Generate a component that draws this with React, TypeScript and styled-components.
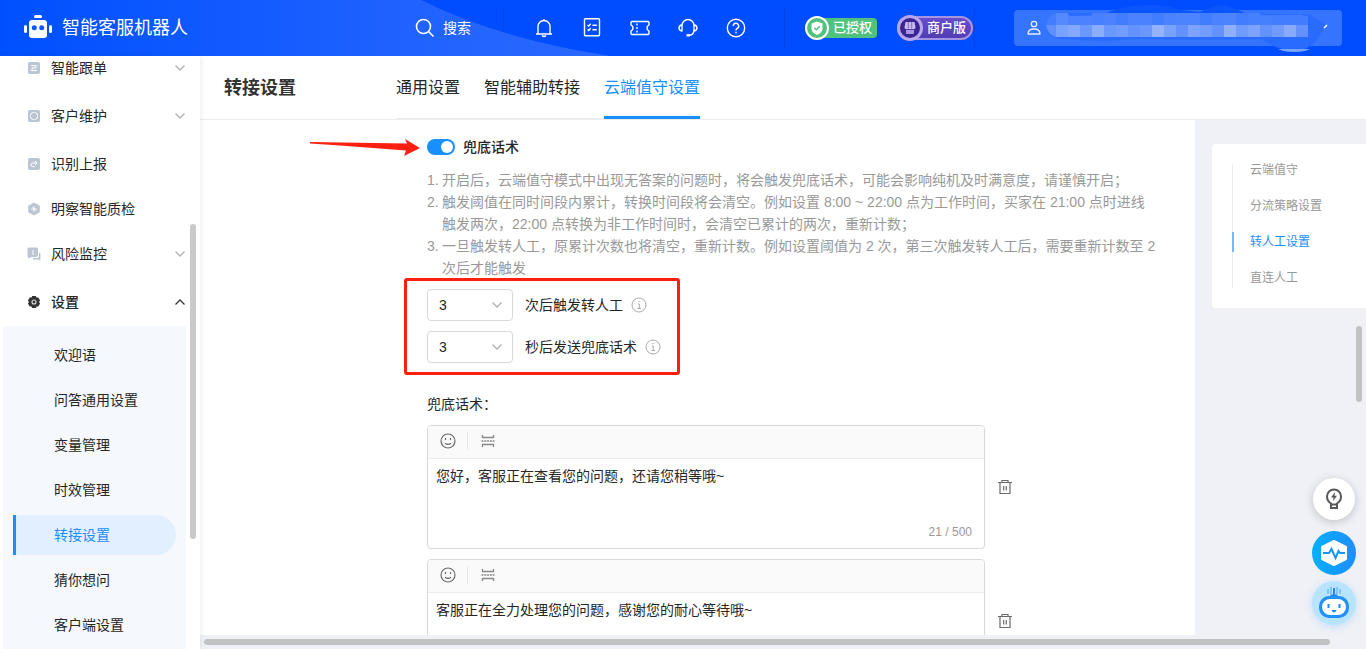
import React, { useState } from "react";
import styled, { createGlobalStyle, css } from "styled-components";

const blue = "#1890ff";
const ink = "#262626";
const red = "#fd1f10";

const GlobalStyle = createGlobalStyle`
  * { box-sizing: border-box; }
  body {
    margin: 0;
    overflow: hidden;
    background: #fff;
    color: ${ink};
    font-family: "Liberation Sans", "Noto Sans CJK SC", sans-serif;
    font-size: 14px;
    line-height: 22px;
  }
  button, input, select, textarea { font: inherit; color: inherit; margin: 0; }
  button { border: 0; padding: 0; background: none; cursor: pointer; }
  a { color: inherit; text-decoration: none; }
  svg { display: block; flex: none; }
`;

const Shell = styled.div`
  display: grid;
  grid-template: 56px minmax(0, 1fr) / 200px minmax(0, 1fr);
  height: 100vh;
`;

/* ---------- top bar ---------- */

const TopBar = styled.header`
  grid-column: 1 / -1;
  position: relative;
  display: flex;
  align-items: center;
  padding: 0 24px;
  background: #004dff;
  color: #fff;
`;

const Wave = styled.svg`
  position: absolute;
  left: 0;
  top: 0;
`;

const Brand = styled.div`
  position: relative;
  display: flex;
  align-items: center;
  gap: 10px;
  margin-right: auto;
  font-size: 18px;
`;

const SearchButton = styled.button`
  position: relative;
  display: flex;
  align-items: center;
  gap: 8px;
  width: 88px;
`;

const ToolIcons = styled.div`
  display: flex;
  align-items: center;
  gap: 28px;
  padding: 0 38px 0 30px;
  border: solid #0047e6;
  border-width: 0 1px;
  height: 40px;
`;

const Badges = styled.div`
  display: flex;
  align-items: center;
  gap: 20px;
  padding: 0 1px 0 20px;
  height: 40px;
  border-right: 1px solid #0047e6;
`;

const Badge = styled.span<{ $kind: "green" | "purple" }>`
  display: flex;
  align-items: center;
  gap: 4px;
  height: 20px;
  padding-right: ${(p) => (p.$kind === "green" ? 5 : 7)}px;
  font-weight: 500;
  font-size: 13px;
  border-radius: ${(p) => (p.$kind === "green" ? "10px 4px 4px 10px" : "12px")};
  background: ${(p) => (p.$kind === "green" ? "#50c27d" : "linear-gradient(#6a4fd0, #4f3bb0)")};
  ${(p) =>
    p.$kind === "purple" &&
    css`
      height: 24px;
      box-shadow: inset 0 0 0 2px #a593e4;
    `}
`;

const Account = styled.button`
  position: relative;
  width: 328px;
  height: 36px;
  margin-left: 39px;
  border-radius: 4px;
  background: #3474ff;
`;

const AccountArt = styled.svg`
  position: absolute;
  left: 0;
  top: -10px;
`;

/* ---------- side menu ---------- */

const Side = styled.nav`
  position: relative;
  z-index: 1;
  overflow: hidden;
  box-shadow: 1px 0 5px rgba(0, 0, 0, 0.07);
  background: #fff;
`;

const MenuList = styled.ul`
  list-style: none;
  margin: -8px 0 0;
  padding: 0;
`;

const MenuRow = styled.button<{ $open?: boolean; $leaf?: boolean }>`
  display: flex;
  align-items: center;
  gap: 10px;
  width: 100%;
  height: 40px;
  padding: 0 14px 0 28px;
  margin-bottom: ${(p) => (p.$leaf ? 5 : 8)}px;
  text-align: left;
  font-weight: ${(p) => (p.$open ? 500 : 400)};
  ${(p) => p.$open && "margin-bottom: 4px;"}
  span { flex: 1; margin-left: 1px; }
`;

const SubMenu = styled.ul`
  display: grid;
  gap: 5px;
  list-style: none;
  margin: 0 14px 0 3px;
  padding: 9px 10px;
  background: #f5f9fd;
`;

const SubLink = styled.a<{ $active?: boolean }>`
  display: block;
  padding: 9px 38px;
  border-left: 3px solid ${(p) => (p.$active ? blue : "transparent")};
  border-radius: 0 20px 20px 0;
  background: ${(p) => (p.$active ? "#e1efff" : "none")};
  color: ${(p) => (p.$active ? blue : ink)};
`;

const Thumb = styled.div<{ $side?: boolean }>`
  position: absolute;
  right: 4px;
  width: 6px;
  border-radius: 3px;
  ${(p) =>
    p.$side
      ? "top: 168px; height: 315px; background: #c9c9c9;"
      : "top: 270px; height: 76px; background: #c1c2c3;"}
`;

/* ---------- page ---------- */

const Page = styled.main`
  position: relative;
  display: flex;
  flex-direction: column;
  min-width: 0;
  min-height: 0;
`;

const PageHead = styled.div`
  display: flex;
  height: 64px;
  padding-left: 24px;
  border-bottom: 1px solid #ececee;
`;

const PageTitle = styled.h1`
  width: 172px;
  margin: 0;
  font-size: 18px;
  line-height: 64px;
  font-weight: 700;
  color: #333;
`;

const Tabs = styled.nav`
  display: flex;
  gap: 24px;
  box-shadow: inset 0 -1px #ececee;
`;

const Tab = styled.a<{ $active?: boolean }>`
  font-size: 16px;
  line-height: 64px;
  height: 63px;
  color: ${(p) => (p.$active ? blue : ink)};
  box-shadow: ${(p) => (p.$active ? `inset 0 -3px ${blue}` : "none")};
`;

const Body = styled.div`
  flex: 1;
  min-height: 0;
  display: flex;
  overflow: hidden;
  background: #eff1f6;
`;

const Panel = styled.section`
  flex: 1;
  min-width: 0;
  height: max-content;
  padding: 16px 34px 24px 227px;
  background: #fff;
`;

const SwitchRow = styled.label`
  position: relative;
  display: flex;
  align-items: center;
  gap: 8px;
  width: max-content;
  font-weight: 500;
`;

const Arrow = styled.svg`
  position: absolute;
  right: 100%;
  top: 2px;
  margin-right: 7px;
`;

const Switch = styled.input`
  appearance: none;
  width: 28px;
  height: 16px;
  border-radius: 8px;
  background: #bfbfbf;
  padding: 2px;
  &::before {
    content: "";
    display: block;
    width: 12px;
    height: 12px;
    border-radius: 50%;
    background: #fff;
  }
  &:checked { background: ${blue}; }
  &:checked::before { margin-left: auto; }
`;

const Notes = styled.ol`
  max-width: 730px;
  margin: 11px 0 10px;
  padding: 0;
  list-style: none;
  color: #999;
`;

const Note = styled.li`
  display: grid;
  grid-template-columns: 15px 1fr;
`;

const Rules = styled.div`
  position: relative;
  display: grid;
  gap: 10px;
  width: max-content;
`;

const Highlight = styled.div`
  position: absolute;
  inset: -11px -19px -12px -23px;
  border: 3px solid ${red};
  border-radius: 3px;
  pointer-events: none;
`;

const Rule = styled.div`
  display: flex;
  align-items: center;
  gap: 8px;
  label { margin-left: 4px; }
`;

const SelectBox = styled.span`
  display: grid;
  align-items: center;
  width: 86px;
  > * { grid-area: 1 / 1; }
  svg { justify-self: end; margin-right: 10px; pointer-events: none; }
`;

const Select = styled.select`
  appearance: none;
  height: 32px;
  padding: 0 11px;
  border: 1px solid #d9d9d9;
  border-radius: 4px;
  background: #fff;
`;

const SectionLabel = styled.h2`
  margin: 30px 0 10px;
  font-size: 14px;
  font-weight: 400;
`;

const ReplyRow = styled.div`
  display: flex;
  align-items: center;
  gap: 12px;
  margin-bottom: 10px;
`;

const Editor = styled.div`
  display: flex;
  flex-direction: column;
  width: 558px;
  height: 124px;
  border: 1px solid #d9d9d9;
  border-radius: 4px;
  overflow: hidden;
`;

const EditorTools = styled.div`
  display: flex;
  align-items: center;
  gap: 12px;
  height: 33px;
  padding: 0 12px 2px;
  border-bottom: 1px solid #ececec;
  background: #fafafa;
`;

const ToolDivider = styled.i`
  width: 1px;
  height: 18px;
  margin-left: -1px;
  background: #e8e8e8;
`;

const TextArea = styled.textarea`
  flex: 1;
  min-height: 0;
  padding: 6px 8px;
  border: 0;
  outline: 0;
  resize: none;
  background: #fff;
`;

const Counter = styled.div`
  padding: 0 12px 5px;
  font-size: 12px;
  text-align: right;
  color: #999;
`;

const Aside = styled.aside`
  flex: none;
  width: 171px;
  padding: 24px 0 0 17px;
`;

const AnchorCard = styled.nav`
  padding: 16px 20px 20px;
  border-radius: 4px 0 0 4px;
  background: #fff;
`;

const AnchorList = styled.ul`
  display: grid;
  gap: 16px;
  list-style: none;
  margin: 0;
  padding: 0;
  background: linear-gradient(transparent 4px, #ececee 4px) 0 0 / 1px 100% no-repeat;
`;

const AnchorLink = styled.a<{ $active?: boolean }>`
  display: block;
  padding-left: 16px;
  border-left: 2px solid ${(p) => (p.$active ? "#74b9ff" : "transparent")};
  font-size: 12px;
  line-height: 20px;
  color: ${(p) => (p.$active ? blue : "#999")};
`;

const HBar = styled.div`
  height: 14px;
  padding: 4px 36px 4px 4px;
  background: #eff1f6;
  &::before {
    content: "";
    display: block;
    height: 6px;
    border-radius: 3px;
    background: #c1c2c3;
  }
`;

const FloatTools = styled.div`
  position: fixed;
  right: 10px;
  bottom: 24px;
  display: grid;
  justify-items: center;
  gap: 6px;
`;

const FloatButton = styled.button<{ $kind: "tip" | "pulse" | "bot" }>`
  display: grid;
  place-items: center;
  width: 44px;
  height: 44px;
  border-radius: 50%;
  ${(p) =>
    p.$kind === "tip" &&
    "width: 42px; height: 42px; margin-bottom: 5px; background: #fff; box-shadow: 0 2px 10px rgba(0,0,0,.2);"}
  ${(p) => p.$kind === "pulse" && "background: linear-gradient(90deg, #06b0fa, #1f8dff);"}
  ${(p) => p.$kind === "bot" && "background: #b8e4ff; box-shadow: 0 2px 8px rgba(24,144,255,.2);"}
`;

/* ---------- icons ---------- */

const Line = ({ size = 20, children, ...rest }: { size?: number; children: React.ReactNode } & React.SVGProps<SVGSVGElement>) => (
  <svg width={size} height={size} viewBox={`0 0 ${size} ${size}`} fill="none" stroke="currentColor" strokeWidth="1.4" aria-hidden="true" {...rest}>
    {children}
  </svg>
);

const Chevron = ({ up, color = "#b0b0b0" }: { up?: boolean; color?: string }) => (
  <Line size={12} stroke={color} strokeWidth="1.3">
    <path d={up ? "M1.500 8.500 6 4l4.500 4.500" : "M1.500 3.500 6 8l4.500-4.500"} />
  </Line>
);

const BrandIcon = () => (
  <svg width="28" height="26" viewBox="0 0 28 26" fill="#fff" aria-hidden="true">
    <rect x="10" y="0" width="8" height="3" rx="1.5" />
    <rect x="0" y="10" width="3" height="8" rx="1.5" />
    <rect x="25" y="10" width="3" height="8" rx="1.5" />
    <rect x="5" y="5" width="18" height="18" rx="3" />
    <circle cx="10.3" cy="12.7" r="2.5" fill="#0b57ff" />
    <circle cx="17.7" cy="12.7" r="2.5" fill="#0b57ff" />
  </svg>
);

const MenuIcon = ({ name }: { name: string }) => {
  const box = <rect width="12" height="12" rx="2" fill="#bcc5d3" />;
  const drawing: Record<string, React.ReactNode> = {
    order: <>{box}<path d="M3 3.7h4.8v2.3H4v2.6h5M9 3.2v1M3 8.1v1" stroke="#fff" fill="none" /></>,
    customer: <>{box}<circle cx="6" cy="6" r="3.7" stroke="#fff" fill="none" strokeDasharray="5 .8" /></>,
    report: <>{box}<path d="M8.5 5H4.8a1.6 1.6 0 0 0 0 3.6H7M7 3l2 2-2 2" stroke="#fff" fill="none" /></>,
    quality: <><path d="M6-.5 11.8 2.8v6.4L6 12.5.2 9.2V2.8z" fill="#bcc5d3" /><path d="M6 3.2v5.6M3.2 6h5.6M4.5 4.5 7.5 7.5" stroke="#fff" fill="none" /></>,
    risk: <><path d="M1-.5h7.5a1.5 1.5 0 0 1 1.5 1.5v6a2 2 0 0 1-2 2H3.5L.5 10.5-.5 8V1A1.5 1.5 0 0 1 1-.5z" fill="#bcc5d3" /><path d="M11 4.5l1.4 1v7.2L10.8 11.5H5.2L4.7 10H9a2 2 0 0 0 2-2z" fill="#bcc5d3" /><path d="M5 2v5" stroke="#fff" /></>,
    settings: <><path d="M4.200 0h3.600l.7 1.600 1.800-.2 1.800 3L11 6l1.100 1.600-1.800 3-1.800-.2-.7 1.600H4.200l-.7-1.600-1.800.2-1.800-3L1 6-.1 4.400l1.800-3 1.800.2z" fill="#333" /><circle cx="6" cy="6" r="2" stroke="#ddd" fill="none" strokeWidth="1.100" /></>,
  };
  return (
    <svg width="12" height="12" viewBox="0 0 12 12" overflow="visible" aria-hidden="true">
      {drawing[name]}
    </svg>
  );
};

const InfoIcon = () => (
  <Line size={16} stroke="#aaa" strokeWidth="1">
    <circle cx="8" cy="8" r="7" />
    <path d="M6.800 7H8.300v4.500M6.500 11.500h3.500M7.300 4.500h1.400" />
  </Line>
);

const SmileIcon = () => (
  <Line size={16} stroke="#6b6b6b" strokeWidth="1.2">
    <circle cx="8" cy="8" r="7" />
    <path d="M5.500 5v2M10.500 5v2M5 10.200q3 2.200 6 0" />
  </Line>
);

const SplitIcon = () => (
  <Line size={16} stroke="#8a8a8a" strokeWidth="1.300">
    <path d="M2.500 2v2.500h11V2M2.500 14v-2.500h11V14" />
    <path d="M1.500 8h13" strokeDasharray="2 .8" />
  </Line>
);

const TrashIcon = () => (
  <Line size={16} stroke="#6b6b6b" strokeWidth="1.200">
    <path d="M1 3.500h14M5 3V1.500h6V3M3 3.500v11h10v-11M6.700 7v4.500M9.300 7v4.500" />
  </Line>
);

const mosaicTop = ["#558aff", "#4c82ff", "#4c82ff", "#4880ff", "#4c82ff", "#427cff", "#4a82ff", "#4a82ff", "#427cff", "#4a82ff", "#4c84ff", "#4c84ff", "#427cff", "#4a82ff", "#4c84ff", "#427cff", "#4580ff", "#4580ff", "#427cff", "#427cff", "#427cff"];
const mosaicLow = ["#79a1ff", "#83a8ff", "#6b98ff", "#8badff", "#6b98ff", "#729dff", "#6392ff", "#6b98ff", "#94b2ff", "#79a1ff", "#6392ff", "#7ba3ff", "#729dff", "#6392ff", "#8fb0ff", "#719cff", "#7ba3ff", "#6392ff", "#719cff", "#87aaff", "#6392ff"];

/* ---------- content ---------- */

const menu = [
  { icon: "order", text: "智能跟单" },
  { icon: "customer", text: "客户维护" },
  { icon: "report", text: "识别上报", leaf: true },
  { icon: "quality", text: "明察智能质检", leaf: true },
  { icon: "risk", text: "风险监控" },
  { icon: "settings", text: "设置", open: true },
];
const subMenu = ["欢迎语", "问答通用设置", "变量管理", "时效管理", "转接设置", "猜你想问", "客户端设置"];
const tabs = ["通用设置", "智能辅助转接", "云端值守设置"];
const anchors = ["云端值守", "分流策略设置", "转人工设置", "直连人工"];
const notes = [
  "开启后，云端值守模式中出现无答案的问题时，将会触发兜底话术，可能会影响纯机及时满意度，请谨慎开启；",
  "触发阈值在同时间段内累计，转换时间段将会清空。例如设置 8:00 ~ 22:00 点为工作时间，买家在 21:00 点时进线触发两次，22:00 点转换为非工作时间时，会清空已累计的两次，重新计数；",
  "一旦触发转人工，原累计次数也将清空，重新计数。例如设置阈值为 2 次，第三次触发转人工后，需要重新计数至 2 次后才能触发",
];
const rules = [
  { id: "times", text: "次后触发转人工" },
  { id: "seconds", text: "秒后发送兜底话术" },
];

function Reply({ initial, counter }: { initial: string; counter?: boolean }) {
  const [text, setText] = useState(initial);
  return (
    <ReplyRow>
      <Editor>
        <EditorTools>
          <button aria-label="表情"><SmileIcon /></button>
          <ToolDivider />
          <button aria-label="分隔"><SplitIcon /></button>
        </EditorTools>
        <TextArea aria-label="兜底话术" value={text} onChange={(e) => setText(e.target.value)} />
        {counter && <Counter>{text.length} / 500</Counter>}
      </Editor>
      <button aria-label="删除"><TrashIcon /></button>
    </ReplyRow>
  );
}

export default function App() {
  const [on, setOn] = useState(true);
  return (
    <Shell>
      <GlobalStyle />
      <TopBar>
        <Wave width="610" height="56" aria-hidden="true">
          <defs>
            <linearGradient id="wave">
              <stop offset="0" stopColor="#0050ff" />
              <stop offset=".75" stopColor="#2364ff" />
              <stop offset="1" stopColor="#2a69ff" />
            </linearGradient>
          </defs>
          <path d="M0 0H421Q499 39 610 56H0z" fill="url(#wave)" />
        </Wave>
        <Brand><BrandIcon />智能客服机器人</Brand>
        <SearchButton>
          <Line strokeWidth="1.600"><circle cx="8.500" cy="8.500" r="7" /><path d="m13.500 13.500 5 5" /></Line>
          搜索
        </SearchButton>
        <ToolIcons>
          <button aria-label="通知">
            <Line><path d="M2 16h16M4 16V8.500a6 6 0 0 1 12 0V16M8 17.500q2 2 4 0M10 1v1.500" /></Line>
          </button>
          <button aria-label="任务">
            <Line><rect x="2.500" y=".7" width="15" height="17" rx="1" /><path d="m5.500 7 1.200 1 2-2.200M10.500 7.200h4.300M5.500 11.500l1.200 1 2-2.200M10.500 11.700h4.300" /></Line>
          </button>
          <button aria-label="卡券">
            <Line><path d="M2 3.500h16a1 1 0 0 1 1 1v2.500l-1.800 1.500v3L19 13v2.500a1 1 0 0 1-1 1H2a1 1 0 0 1-1-1V13l1.800-1.500v-3L1 7V4.500a1 1 0 0 1 1-1z" /><path d="M7 5.500v9" strokeDasharray="2 1.500" /></Line>
          </button>
          <button aria-label="客服">
            <Line><path d="M4 13.500V7.500a6 6 0 0 1 12 0v4q0 5-4 5.700" /><path d="M4 7q-3 .3-3 3t3 3M16 7q3 .3 3 3t-3 3" /><path d="M8.500 17.300h3.500" strokeWidth="2.400" /></Line>
          </button>
          <button aria-label="帮助">
            <Line><circle cx="10" cy="10" r="8.700" /><path d="M7.300 8a2.700 2.700 0 1 1 3.700 2.500q-1 .4-1 2M10 13.800v1.500" /></Line>
          </button>
        </ToolIcons>
        <Badges>
          <Badge $kind="green">
            <svg width="24" height="24" viewBox="0 0 24 24" aria-hidden="true">
              <circle cx="12" cy="12" r="11" fill="#50c27d" stroke="#fff" strokeWidth="2" />
              <path d="m12 5.500 5.500 2v5q0 4-5.500 6.500-5.500-2.500-5.500-6.500v-5z" fill="#fff" />
              <path d="m9.300 11.800 2 2 3.500-3.500" fill="none" stroke="#50c27d" strokeWidth="1.500" />
            </svg>
            已授权
          </Badge>
          <Badge $kind="purple">
            <svg width="26" height="26" viewBox="0 0 26 26" aria-hidden="true">
              <circle cx="13" cy="13" r="11.500" fill="#3b2494" stroke="#b7a6ee" strokeWidth="3" />
              <path d="M8.500 7h9l1 5.500q0 1.500-1.500 1.500H9q-1.500 0-1.500-1.500z" fill="#c9bcf5" />
              <path d="M9 14.800h8V18q0 1-1 1h-6q-1 0-1-1z" fill="#a996e8" />
              <path d="M11.300 7v6.500M14.700 7v6.500" stroke="#6d56c4" strokeWidth=".8" />
            </svg>
            商户版
          </Badge>
        </Badges>
        <Account aria-label="账户">
          <AccountArt width="328" height="56" aria-hidden="true">
            <path d="M85 16Q110 4 140 5q16 1 26 5l20 2q18-9 28-6 14 6 20 8z" fill="#0b55ff" />
            <path d="M47 13q-15 2-15 12 0 12 15 14l40 2 40-2 60 1 60-1q18 13 38 11 18-2 26-26L296 15 240 13z" fill="#2a6bff" />
            <path d="M42 13h10l5 3 30-1 12-2h140l10 2h40v10H32q1-10 10-12z" fill="#437cff" />
            <path d="M32 25h10v12q-9-3-10-12z" fill="#5f90ff" />
            {mosaicTop.map((c, i) => <rect key={i} x={42 + i * 12} y={i > 16 || i === 1 || i === 2 ? 16 : 13} width="12" height={i > 16 || i === 1 || i === 2 ? 9 : 12} fill={c} />)}
            {mosaicLow.map((c, i) => <rect key={i} x={42 + i * 12} y="25" width="12" height="12" fill={c} />)}
            <path d="M264 49h32q-5 3-16 3t-16-3z" fill="#79a5ff" />
            <path d="m310 28 3-3" stroke="#fff" strokeWidth="1.500" />
            <g fill="none" stroke="#e6edff" strokeWidth="1.300">
              <circle cx="20" cy="24" r="2.700" />
              <path d="M14 34q0-5 6-5t6 5z" strokeLinejoin="round" />
            </g>
          </AccountArt>
        </Account>
      </TopBar>

      <Side>
        <MenuList>
          {menu.map((m) => (
            <li key={m.text}>
              <MenuRow $open={m.open} $leaf={m.leaf}>
                <MenuIcon name={m.icon} />
                <span>{m.text}</span>
                {!m.leaf && <Chevron up={m.open} color={m.open ? "#333" : undefined} />}
              </MenuRow>
            </li>
          ))}
        </MenuList>
        <SubMenu>
          {subMenu.map((s) => (
            <li key={s}><SubLink href="#" $active={s === "转接设置"}>{s}</SubLink></li>
          ))}
        </SubMenu>
        <Thumb $side />
      </Side>

      <Page>
        <PageHead>
          <PageTitle>转接设置</PageTitle>
          <Tabs>
            {tabs.map((t, i) => <Tab key={t} href="#" $active={i === 2}>{t}</Tab>)}
          </Tabs>
        </PageHead>
        <Body>
          <Panel>
            <SwitchRow>
              <Arrow width="110" height="19" viewBox="0 0 110 19" aria-hidden="true">
                <path d="M0 4 97 5.500 95 1l15 9-16 8 2-5.500L30 7.500 0 5.500z" fill={red} />
              </Arrow>
              <Switch type="checkbox" role="switch" checked={on} onChange={() => setOn(!on)} />
              兜底话术
            </SwitchRow>
            <Notes>
              {notes.map((n, i) => (
                <Note key={n}><span>{i + 1}.</span><span>{n}</span></Note>
              ))}
            </Notes>
            <Rules>
              {rules.map((r) => (
                <Rule key={r.id}>
                  <SelectBox>
                    <Select id={r.id} defaultValue="3">
                      {["1", "2", "3", "4", "5"].map((v) => <option key={v}>{v}</option>)}
                    </Select>
                    <Chevron />
                  </SelectBox>
                  <label htmlFor={r.id}>{r.text}</label>
                  <InfoIcon />
                </Rule>
              ))}
              <Highlight />
            </Rules>
            <SectionLabel>兜底话术：</SectionLabel>
            <Reply initial="您好，客服正在查看您的问题，还请您稍等哦~" counter />
            <Reply initial="客服正在全力处理您的问题，感谢您的耐心等待哦~" />
          </Panel>
          <Aside>
            <AnchorCard>
              <AnchorList>
                {anchors.map((a, i) => (
                  <li key={a}><AnchorLink href="#" $active={i === 2}>{a}</AnchorLink></li>
                ))}
              </AnchorList>
            </AnchorCard>
          </Aside>
        </Body>
        <HBar />
        <Thumb />
      </Page>

      <FloatTools>
        <FloatButton $kind="tip" aria-label="建议">
          <svg width="18" height="22" viewBox="0 0 18 22" fill="none" stroke="#595959" strokeWidth="2" aria-hidden="true">
            <path d="M6 15.500Q2 13 2 8.500a7 7 0 0 1 14 0q0 4.500-4 7v4.500H6zM6 16.500h6" />
            <path d="M10 4 6 9.500h2.500L8 13l4-5.200H9.500z" fill="#595959" stroke="none" />
          </svg>
        </FloatButton>
        <FloatButton $kind="pulse" aria-label="诊断">
          <svg width="28" height="28" viewBox="0 0 28 28" aria-hidden="true">
            <path d="M14 2 26 8v12l-12 6L2 20V8z" fill="#fff" stroke="#fff" strokeWidth="2" strokeLinejoin="round" />
            <path d="M3 14h6l2.500-4 4 9 3-7 1.500 2h5" fill="none" stroke="#1497fc" strokeWidth="2" />
          </svg>
        </FloatButton>
        <FloatButton $kind="bot" aria-label="助手">
          <svg width="32" height="32" viewBox="0 0 32 32" aria-hidden="true">
            <path d="M10 2v5M13 0v7M19 0v7M22 2v5" stroke="#4ba6f5" strokeWidth="1" />
            <path d="M16 1v7M12.500 8.500h7" stroke="#2b86ea" strokeWidth="2" />
            <rect x="1" y="9" width="30" height="22" rx="10" fill="#2190f8" />
            <rect x="4" y="12" width="24" height="16" rx="8" fill="#fff" />
            <path d="M10.500 17v4M21.500 17v4" stroke="#1c8cf5" strokeWidth="2" />
            <path d="M13.500 23h5q-.8 2.500-2.500 2.500T13.500 23z" fill="#1c8cf5" />
          </svg>
        </FloatButton>
      </FloatTools>
    </Shell>
  );
}
